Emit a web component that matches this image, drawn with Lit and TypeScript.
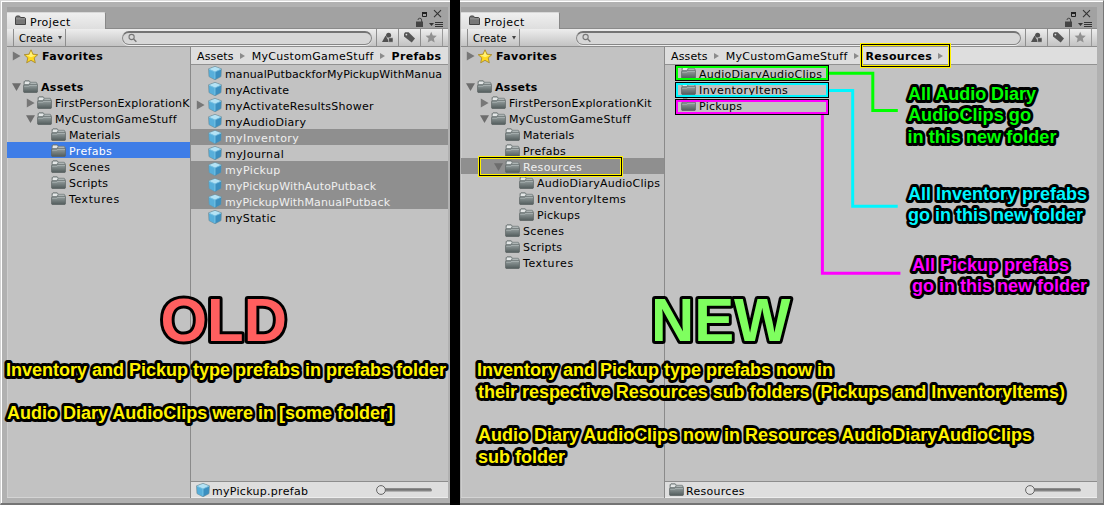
import { LitElement, html, svg, css, nothing } from "lit";
import { customElement, property } from "lit/decorators.js";

type Kind = "folder" | "cube" | "star";
interface Row {
  text: string;
  width?: number;
  level?: number;
  icon: Kind;
  arrow?: "open" | "closed";
  bold?: boolean;
  selected?: "focus" | "dim";
}
interface Crumb {
  text: string;
  width: number;
  bold?: boolean;
}
interface Pane {
  name: string;
  tree: Row[];
  crumbs: Crumb[];
  trailing: boolean;
  list: Row[];
  footer: Row;
}

/* Label whose tracking is adjusted so the text spans a given width. */
@customElement("fit-label")
class FitLabel extends LitElement {
  @property({ type: Number }) width = 0;
  @property() text = "";
  static styles = css`
    :host { display: inline-block; white-space: pre; }
  `;
  updated() {
    const s = this.renderRoot.querySelector("span") as HTMLElement;
    s.style.letterSpacing = "0px";
    const natural = s.getBoundingClientRect().width;
    const gap = this.width ? (this.width + 0.7 - natural) / this.text.length : 0.25;
    s.style.letterSpacing = `${gap}px`;
  }
  render() {
    return html`<span>${this.text}</span>`;
  }
}

const folder = html`<svg class="ic" width="15" height="14" viewBox="0 0 15 14">
  <defs>
    <linearGradient id="f" x1="0" y1="0" x2="0" y2="1">
      <stop offset="0" stop-color="#98a1a1" /><stop offset=".45" stop-color="#778181" /><stop offset="1" stop-color="#525c5c" />
    </linearGradient>
  </defs>
  <path d="M1 12V1.8L2 .8h4.2l1.3 1.5H13.2l.8 1V12z" fill="#7f8888" stroke="#6c7474" stroke-width=".8" />
  <path d="M2 1.5h4l.8 1.1L5.6 4H1.5z" fill="#e4e7e7" />
  <path d="M7.4 3.2h6" stroke="#c9cfcf" stroke-width=".9" />
  <path d="M.6 5.5h5L7 4.6h7.4v7.2q0 .7-.8.7H1.4q-.8 0-.8-.7z" fill="url(#f)" stroke="#596262" stroke-width=".6" />
  <path d="M1.2 6.1h4.6l1.2-.8h7" stroke="#b3bbbb" stroke-width=".8" fill="none" />
</svg>`;

const cube = html`<svg class="ic" width="15" height="14" viewBox="-1 0 15 14">
  <path d="M7 .4 13.4 2.8 13 10.6 7 13.8 1 10.6.6 2.8z" fill="#4f8fb0" stroke="#78959f" stroke-width=".8" />
  <path d="M7 .8 13 3 7 5.8 1 3z" fill="#b4e2f4" />
  <path d="M1 3.2 7 5.8v7.6L1.4 10.4z" fill="#57afdb" />
  <path d="M13 3.2 7 5.8v7.6l5.6-3z" fill="#3b8fc0" />
  <path d="M1 3.2 7 5.8l6-2.6M7 5.8v7" fill="none" stroke="#8bd0ee" stroke-width=".7" />
</svg>`;

const star = html`<svg class="ic" width="16" height="15" viewBox="0 0 16 15">
  <path d="M8 .8 10 5.2l4.8.5-3.6 3.2 1.1 4.9L8 11.3l-4.3 2.5 1.1-4.9L1.2 5.7 6 5.2z" fill="#ffd91f" stroke="#a98a2c" stroke-width=".9" />
  <path d="M8 2.3 9.5 6l3.4.3L8 8.2 3.1 6.3 6.5 6z" fill="#fff27a" />
</svg>`;

const icons = { folder, cube, star };

@customElement("project-window")
class ProjectWindow extends LitElement {
  @property({ attribute: false }) pane!: Pane;

  static styles = css`
    :host { display: block; height: 505px; font: 11px/16px "DejaVu Sans", sans-serif; color: #000; }
    * { box-sizing: border-box; }
    svg { display: block; flex: none; }
    .frame { height: 505px; background: #b1b1b1; border-top: 1px solid #dadada; border-bottom: 2px solid #747474;
      box-shadow: inset 0 1px #fff; padding-top: 6px; display: flex; flex-direction: column; }
    .old { border-left: 1px solid #d2d2d2; box-shadow: inset 1px 1px #fff; padding-left: 6px; padding-right: 2px; }
    .new { border-right: 1px solid #777; padding-left: 1px; padding-right: 6px; }
    .head { height: 22px; background: #a2a2a2; display: flex; justify-content: space-between; align-items: flex-end; border-bottom: 1px solid #8a8a8a; }
    .tab { width: 99px; height: 17px; margin-bottom: -1px; background: linear-gradient(#efefef, #dedede); border: 1px solid #888;
      border-top-color: #d8d8d8; border-left: 0; border-radius: 0 2px 0 0; border-bottom: 0; display: flex; padding-left: 8px; }
    .tab fit-label { margin: 0 0 0 4px; line-height: 19px; }
    .tab svg { margin-top: 2px; }
    .bar { height: 18px; flex: none; background: linear-gradient(#ededed, #c3c3c3); border-bottom: 1px solid #8d8d8d; display: flex; }
    .create { margin-left: 6px; width: 53px; border: 1px solid #8e8e8e; border-width: 0 1px; display: flex; font-size: 10px;
      line-height: 20px; padding-left: 5px; }
    .create svg { margin: 7px 0 0 5px; }
    .search { margin: 2px 4px 2px 56px; flex: 1; height: 14px; border: 1px solid #868686; border-top: 2px solid #747474; border-radius: 7px;
      background: #d7d7d7; padding-left: 5px; box-shadow: 0 1px #eee; }
    .tool { width: 22px; border-left: 1px solid #8e8e8e; display: flex; padding: 2px 0 0 4px; }
    .last { width: 6px; border-left: 1px solid #999; }
    .body { height: 451px; display: grid; background: #c2c2c2; }
    .old .body { grid-template-columns: 183px minmax(0, 1fr); }
    .new .body { grid-template-columns: 203px minmax(0, 1fr); }
    .tree { overflow: hidden; background: linear-gradient(90deg, #cecece 1px, transparent 1px); border-bottom: 1px solid #d4d4d4; }
    .row { height: 16px; display: flex; align-items: center; }
    .row .aw { width: 9px; margin-right: 2px; flex: none; }
    .tree .row { padding-top: 2px; }
    .tree fit-label { margin-left: 3px; padding-top: 1px; }
    .tree .row:first-child { margin-bottom: 15px; }
    .focus { background: #3e7de7; color: #fff; }
    .dim { background: #8f8f8f; color: #f0f0f0; }
    b { font-weight: 700; display: flex; }
    .main { border-left: 1px solid #8a8a8a; display: flex; flex-direction: column; overflow: hidden; }
    .crumbs { height: 18px; flex: none; background: #dedede; border-bottom: 1px solid #919191; display: flex; padding: 2px 0 0 6px; }
    .crumbs svg { margin: 4px 7px 0 6px; }
    .list { flex: 1; overflow: hidden; }
    .list .row { padding-left: 5px; }
    .list .row fit-label { margin-left: 3px; padding-top: 4px; }
    .foot { height: 17px; flex: none; background: #dedede; border-top: 1px solid #8d8d8d; border-bottom: 1px solid #ededed; display: flex; align-items: center; padding: 1px 14px 0 4px; }
    .foot fit-label { flex: 1; margin-left: 2px; padding-top: 4px; }
  `;

  arrow(a?: "open" | "closed") {
    return html`<svg class="aw" width="9" height="10" viewBox="0 0 9 10">
      ${a === "open" ? svg`<path d="M0 1.2h9L4.5 9z" fill="#6d6d6d" />` : a ? svg`<path d="M.8.6v8.8L8.6 5z" fill="#777" />` : nothing}
    </svg>`;
  }

  row(r: Row, inList = false) {
    const label = html`<fit-label .text=${r.text} .width=${r.width ?? 0}></fit-label>`;
    return html`<div class="row ${r.selected ?? ""}" style=${inList ? "" : `padding-left:${5 + (r.level ?? 0) * 14}px`}>
      ${this.arrow(r.arrow)}${icons[r.icon]}
      ${r.bold ? html`<b>${label}</b>` : label}
    </div>`;
  }

  render() {
    const p = this.pane;
    const sep = html`<svg width="5" height="6" viewBox="0 0 5 6"><path d="M0 0v6l5-3z" fill="#8c8c8c" /></svg>`;
    return html`<div class="frame ${p.name}">
      <div class="head">
        <div class="tab">
          <svg width="11" height="11" viewBox="0 0 11 11">
            <path d="M.5 9.5v-7L1.5 1h3l1 1.5h4l1 .8v6.2z" fill="#777" stroke="#444" />
            <path d="M1 3.8h9" stroke="#999" />
          </svg>
          <fit-label text="Project" .width=${40}></fit-label>
        </div>
        <svg width="33" height="21" viewBox="0 0 33 21">
          <path d="M7.5 6.5h4v3h-4z" fill="none" stroke="#222" /><path d="M7 6h5" stroke="#222" stroke-width="2" />
          <path d="m19 3.2 7 7m0-7-7 7" stroke="#333" stroke-width="1.1" />
          <path d="M1 14.5h7V20H1z" fill="#444" /><path d="M3 13q0-1.8 1.8-1.8t1.8 1.8v2" fill="none" stroke="#444" />
          <path d="M14 16h5l-2.5 3z" fill="#333" /><path d="M20 15.5h8m-8 2h8m-8 2h8" stroke="#333" />
        </svg>
      </div>
      <div class="bar">
        <div class="create">
          <fit-label text="Create" .width=${33}></fit-label>
          <svg width="4" height="4" viewBox="0 0 4 4"><path d="M0 0h4L2 3.4z" fill="#444" /></svg>
        </div>
        <div class="search">
          <svg width="9" height="10" viewBox="0 0 9 10"><circle cx="3.6" cy="4" r="2.6" fill="none" stroke="#777" stroke-width="1.1" /><path d="m5.6 6 2.8 2.8" stroke="#777" stroke-width="1.4" /></svg>
        </div>
        <div class="tool"><svg width="14" height="13" viewBox="0 0 14 13">
          <circle cx="7.6" cy="4.2" r="2.5" fill="#505050" /><path d="M4.6 4.5 8.2 11H1z" fill="#505050" /><path d="M7.6 6.8h4.4v4.4H7.6z" fill="#505050" stroke="#d5d5d5" stroke-width=".5" /></svg></div>
        <div class="tool"><svg width="14" height="13" viewBox="0 0 14 13">
          <path d="M1 2.4 2.2 1.2h3.4l6.4 6.2-3.3 4.2L1 5.6z" fill="#555" /><circle cx="3.4" cy="3.6" r=".9" fill="#ddd" /></svg></div>
        <div class="tool"><svg width="13" height="13" viewBox="0 0 13 13">
          <path d="m6.2.8 1.6 3.6 4 .4-3 2.7.9 3.9-3.5-2-3.5 2 .9-3.9-3-2.7 4-.4z" fill="#919191" /></svg></div>
        <div class="last"></div>
      </div>
      <div class="body">
        <div class="tree">${p.tree.map((r) => this.row(r))}</div>
        <div class="main">
          <div class="crumbs">${p.crumbs.map((c, i) => html`
            ${c.bold ? html`<b><fit-label .text=${c.text} .width=${c.width}></fit-label></b>` : html`<fit-label .text=${c.text} .width=${c.width}></fit-label>`}
            ${i < p.crumbs.length - 1 || p.trailing ? sep : nothing}`)}</div>
          <div class="list">${p.list.map((r) => this.row(r, true))}</div>
          <div class="foot">
            ${icons[p.footer.icon]}<fit-label .text=${p.footer.text} .width=${p.footer.width ?? 0}></fit-label>
            <svg width="58" height="12" viewBox="0 0 58 12">
              <rect x="6" y="4.5" width="50" height="3" rx="1.5" fill="#858585" /><path d="M8 5h47" stroke="#666" />
              <circle cx="5" cy="6" r="4.4" fill="#e2e2e2" stroke="#666" />
            </svg>
          </div>
        </div>
      </div>
    </div>`;
  }
}

const T = (text: string, width: number, level: number, extra: Partial<Row> = {}): Row => ({ text, width, level, icon: "folder", ...extra });
const P = (text: string, width = 0, extra: Partial<Row> = {}): Row => ({ text, width, icon: "cube", ...extra });

const head = (kit: Row): Row[] => [
  T("Favorites", 60.5, 0, { icon: "star", bold: true, arrow: "closed" }),
  T("Assets", 42, 0, { bold: true, arrow: "open" }),
  kit,
  T("MyCustomGameStuff", 121, 1, { arrow: "open" }),
  T("Materials", 50.5, 2),
];
const tail: Row[] = [T("Scenes", 40.5, 2), T("Scripts", 38.5, 2), T("Textures", 50, 2)];

const oldPane: Pane = {
  name: "old",
  tree: [
    ...head(T("FirstPersonExplorationK", 134, 1, { arrow: "closed" })),
    T("Prefabs", 42.5, 2, { selected: "focus" }),
    ...tail,
  ],
  crumbs: [
    { text: "Assets", width: 36 },
    { text: "MyCustomGameStuff", width: 121 },
    { text: "Prefabs", width: 49, bold: true },
  ],
  trailing: false,
  list: [
    P("manualPutbackforMyPickupWithManua", 216.5),
    P("myActivate", 63.5),
    P("myActivateResultsShower", 148, { arrow: "closed" }),
    P("myAudioDiary", 80.5),
    P("myInventory", 73.5, { selected: "dim" }),
    P("myJournal", 58.5),
    P("myPickup", 55, { selected: "dim" }),
    P("myPickupWithAutoPutback", 150.5, { selected: "dim" }),
    P("myPickupWithManualPutback", 164.5, { selected: "dim" }),
    P("myStatic", 50.5),
  ],
  footer: P("myPickup.prefab", 95.5),
};

const newPane: Pane = {
  name: "new",
  tree: [
    ...head(T("FirstPersonExplorationKit", 142, 1, { arrow: "closed" })),
    T("Prefabs", 42.5, 2),
    T("Resources", 58.5, 2, { arrow: "open", selected: "dim" }),
    T("AudioDiaryAudioClips", 122.5, 3),
    T("InventoryItems", 88.5, 3),
    T("Pickups", 42.5, 3),
    ...tail,
  ],
  crumbs: [
    { text: "Assets", width: 36 },
    { text: "MyCustomGameStuff", width: 121 },
    { text: "Resources", width: 66, bold: true },
  ],
  trailing: true,
  list: [T("AudioDiaryAudioClips", 122.5, 0), T("InventoryItems", 88.5, 0), T("Pickups", 42.5, 0)],
  footer: T("Resources", 58, 0),
};

const notes: [string, number, number, number, string][] = [
  ["Inventory and Pickup type prefabs in prefabs folder", 6, 376, 440, "#fff200"],
  ["Audio Diary AudioClips were in [some folder]", 7, 419, 386, "#fff200"],
  ["Inventory and Pickup type prefabs now in", 477, 376, 356, "#fff200"],
  ["their respective Resources sub folders (Pickups and InventoryItems)", 478, 398, 587, "#fff200"],
  ["Audio Diary AudioClips now in Resources AudioDiaryAudioClips", 478, 441, 554, "#fff200"],
  ["sub folder", 478, 462.5, 87, "#fff200"],
  ["All Audio Diary", 908, 99.5, 128, "#00ff00"],
  ["AudioClips go", 908, 121, 123, "#00ff00"],
  ["in this new folder", 907.5, 142.5, 149, "#00ff00"],
  ["All Inventory prefabs", 908, 199.5, 179, "#00f6ff"],
  ["go in this new folder", 908, 221, 175, "#00f6ff"],
  ["All Pickup prefabs", 912, 270.5, 157, "#ff00ff"],
  ["go in this new folder", 912, 292, 175, "#ff00ff"],
];
const frames: [number, string][] = [[65, "#00ff00"], [82, "#00f6ff"], [99, "#ff00ff"]];
const outlines = [[860, 43, 91, 25], [478, 156, 145, 21]];

@customElement("app-root")
class AppRoot extends LitElement {
  static styles = css`
    :host { display: block; position: relative; width: 1104px; height: 505px; overflow: hidden; }
    .windows { display: grid; grid-template-columns: 450px 644px; column-gap: 10px; background: #000; }
    .notes { position: absolute; inset: 0; }
    text { font-family: "Liberation Sans", Arial, sans-serif; font-weight: 700; font-size: 19.2px; paint-order: stroke;
      stroke: #000; stroke-width: 6px; stroke-linejoin: round; }
    .big { font-size: 61px; stroke-width: 6px; }
  `;
  render() {
    return html`
      <div class="windows">
        <project-window .pane=${oldPane}></project-window>
        <project-window .pane=${newPane}></project-window>
      </div>
      <svg class="notes" width="1104" height="505" viewBox="0 0 1104 505">
        <path d="M829 73.3h43.8v37.2h25" fill="none" stroke="#00ff00" stroke-width="3" />
        <path d="M829 90.5h23.7v115.7h45" fill="none" stroke="#00f6ff" stroke-width="3" />
        <path d="M822.4 115v158.3h78" fill="none" stroke="#ff00ff" stroke-width="3" />
        ${frames.map(([y, c]) => svg`
          <rect x="675.5" y=${y + 0.5} width="153" height="15" fill="none" stroke="#000" />
          <rect x="677" y=${y + 2} width="150" height="12" fill="none" stroke=${c} stroke-width="2" />`)}
        ${outlines.map(([x, y, w, h]) => svg`
          <rect x=${x + 1.5} y=${y + 1.5} width=${w - 3} height=${h - 3} fill="none" stroke="#fff200" stroke-width="3" />
          <rect x=${x + 1.5} y=${y + 1.5} width=${w - 3} height=${h - 3} fill="none" stroke="#000" />`)}
        <text class="big" x="160.5" y="340.5" textLength="126.5" lengthAdjust="spacingAndGlyphs" fill="#ff5f5f">OLD</text>
        <text class="big" x="651" y="341" textLength="139.5" lengthAdjust="spacingAndGlyphs" fill="#7fff5f">NEW</text>
        ${notes.map(([t, x, y, w, c]) => svg`<text x=${x} y=${y} textLength=${w} lengthAdjust="spacingAndGlyphs" fill=${c}>${t}</text>`)}
      </svg>`;
  }
}
